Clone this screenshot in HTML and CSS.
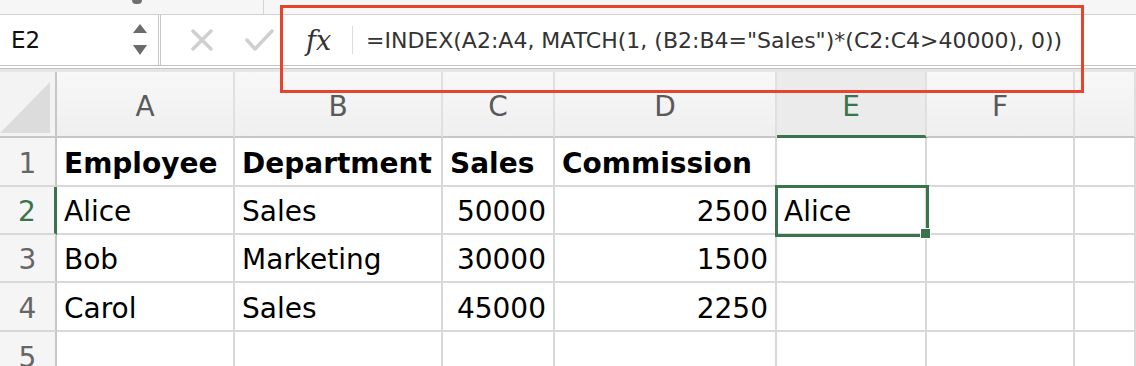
FILE: index.html
```html
<!DOCTYPE html>
<html lang="en">

<head>
  <meta charset="utf-8" />
  <title>Sheet - INDEX MATCH</title>
  <link rel="stylesheet" href="styles.css">
</head>

<body>
  <div class="app">

    <div class="ribbon_edge">
      <span class="chevron"></span>
      <span class="divider"></span>
    </div>

    <div class="formula_bar">
      <div class="name_box">
        <span class="cell_ref">E2</span>
        <svg class="spinner" width="14" height="32" viewBox="0 0 14 32">
          <path d="M7 0 L14 9 L0 9 Z" fill="#6b6b6b" />
          <path d="M0 21 L14 21 L7 31 Z" fill="#6b6b6b" />
        </svg>
      </div>
      <div class="formula_actions">
        <svg width="22" height="22" viewBox="0 0 22 22">
          <path d="M2 2 L20 20 M20 2 L2 20" stroke="#cfcfcf" stroke-width="3.5" stroke-linecap="round" fill="none" />
        </svg>
        <svg width="29" height="22" viewBox="0 0 29 22">
          <path d="M2 11 L10 20 L27 2" stroke="#cfcfcf" stroke-width="3.5" stroke-linecap="round" stroke-linejoin="round" fill="none" />
        </svg>
      </div>
      <div class="formula_input">
        <span class="fx">fx</span>
        <span class="fx_sep"></span>
        <span class="formula_text">=INDEX(A2:A4, MATCH(1, (B2:B4="Sales")*(C2:C4&gt;40000), 0))</span>
      </div>
    </div>

    <div class="sheet">
      <!-- column headers -->
      <div class="cell corner"><span class="corner_tri"></span></div>
      <div class="cell col_head">A</div>
      <div class="cell col_head">B</div>
      <div class="cell col_head">C</div>
      <div class="cell col_head">D</div>
      <div class="cell col_head active">E</div>
      <div class="cell col_head">F</div>
      <div class="cell col_head"></div>

      <!-- row 1 -->
      <div class="cell row_head">1</div>
      <div class="cell bold">Employee</div>
      <div class="cell bold">Department</div>
      <div class="cell bold">Sales</div>
      <div class="cell bold">Commission</div>
      <div class="cell"></div>
      <div class="cell"></div>
      <div class="cell"></div>

      <!-- row 2 -->
      <div class="cell row_head active">2</div>
      <div class="cell">Alice</div>
      <div class="cell">Sales</div>
      <div class="cell num">50000</div>
      <div class="cell num">2500</div>
      <div class="cell selected">Alice</div>
      <div class="cell"></div>
      <div class="cell"></div>

      <!-- row 3 -->
      <div class="cell row_head">3</div>
      <div class="cell">Bob</div>
      <div class="cell">Marketing</div>
      <div class="cell num">30000</div>
      <div class="cell num">1500</div>
      <div class="cell"></div>
      <div class="cell"></div>
      <div class="cell"></div>

      <!-- row 4 -->
      <div class="cell row_head">4</div>
      <div class="cell">Carol</div>
      <div class="cell">Sales</div>
      <div class="cell num">45000</div>
      <div class="cell num">2250</div>
      <div class="cell"></div>
      <div class="cell"></div>
      <div class="cell"></div>

      <!-- row 5 -->
      <div class="cell row_head">5</div>
      <div class="cell"></div>
      <div class="cell"></div>
      <div class="cell"></div>
      <div class="cell"></div>
      <div class="cell"></div>
      <div class="cell"></div>
      <div class="cell"></div>
    </div>

    <!-- red annotation round the formula -->
    <div class="callout"></div>
  </div>
</body>

</html>
```

FILE: styles.css
```css
body {
  margin: 0;
  background: #fff;
  font-family: "DejaVu Sans", "Liberation Sans", sans-serif;
}

.app {
  position: relative;
  width: 1136px;
  height: 366px;
  overflow: hidden;
}

/* bottom edge of the ribbon above the formula bar */
.ribbon_edge {
  display: flex;
  height: 14px;
  background: #f6f6f6;
  border-bottom: 1px solid #d2d2d2;
}

.chevron {
  margin-left: 132px;
  width: 10px;
  height: 4px;
  background: #707070;
  border-radius: 0 0 5px 5px;
}

.divider {
  margin-left: 121px;
  width: 1px;
  background: #d4d4d4;
}

/* formula bar */
.formula_bar {
  display: flex;
  height: 50px;
  border-bottom: 4px double #c2c2c2;
}

.name_box {
  box-sizing: border-box;
  width: 161px;
  display: flex;
  align-items: center;
  justify-content: space-between;
  padding: 0 11px 0 11px;
  border-right: 3px double #c8c8c8;
}

.cell_ref {
  font-size: 23px;
  color: #111;
}

.formula_actions {
  box-sizing: border-box;
  width: 119px;
  display: flex;
  align-items: center;
  padding-left: 30px;
  gap: 32px;
}

.formula_input {
  flex: 1;
  display: flex;
  align-items: center;
  padding-left: 26px;
}

.fx {
  width: 29px;
  font-family: "DejaVu Serif", "Liberation Serif", serif;
  font-style: italic;
  font-size: 27px;
  color: #333;
}

.fx_sep {
  width: 1px;
  height: 28px;
  margin-left: 17px;
  background: #dcdcdc;
}

.formula_text {
  margin-left: 13px;
  font-size: 22px;
  color: #333;
  white-space: nowrap;
}

/* grid */
.sheet {
  display: grid;
  grid-template-columns: 57px 178px 208px 112px 222px 150px 148px 1fr;
  grid-template-rows: 66px 49px 48px 48px 49px 49px;
  border-top: 3px solid #e6e6e6;
}

.cell {
  box-sizing: border-box;
  display: flex;
  align-items: center;
  padding: 3px 7px 0;
  border-right: 2px solid #d8d8d8;
  border-bottom: 2px solid #d8d8d8;
  font-size: 28px;
  color: #000;
  white-space: nowrap;
}

.bold {
  font-weight: bold;
}

.num {
  justify-content: flex-end;
}

.corner {
  justify-content: flex-end;
  align-items: flex-end;
  padding: 0 5px 3px 0;
  background: #f3f3f3;
  border-right-color: #c6c6c6;
  border-bottom-color: #c6c6c6;
}

.corner_tri {
  width: 52px;
  height: 51px;
  background: #dcdcdc;
  clip-path: polygon(100% 0, 100% 100%, 0 100%);
}

.col_head {
  justify-content: center;
  padding-top: 5px;
  background: linear-gradient(#f8f8f8, #efefef);
  border-right-color: #e0e0e0;
  border-bottom-color: #c6c6c6;
  color: #5a5a5a;
}

.col_head.active {
  background: #ebebeb;
  border-bottom: 3px solid #3a744a;
  color: #3a744a;
}

.row_head {
  justify-content: center;
  padding: 3px 0 0;
  background: #f5f5f5;
  border-right-color: #c6c6c6;
  color: #666;
}

.row_head.active {
  border-right: 3px solid #3a744a;
  color: #3a744a;
}

.selected {
  position: relative;
  outline: 3px solid #3a744a;
  outline-offset: -1px;
}

/* fill handle */
.selected::after {
  content: "";
  position: absolute;
  right: -6px;
  bottom: -6px;
  width: 9px;
  height: 9px;
  background: #3a744a;
  border: 1px solid #fff;
}

.callout {
  position: absolute;
  left: 280px;
  top: 5px;
  width: 804px;
  height: 88px;
  box-sizing: border-box;
  border: 3px solid #e8442c;
}
```
